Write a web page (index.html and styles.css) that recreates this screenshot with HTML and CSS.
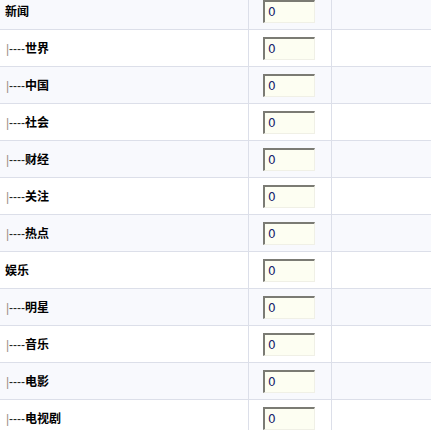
FILE: index.html
```html
<!DOCTYPE html>
<html>
<head>
<meta charset="utf-8">
<link rel="stylesheet" href="styles.css">
</head>
<body>
<table class="grid">
<tr class="alt"><td class="name"><b>新闻</b></td><td class="val"><input class="num" type="text" value="0"></td><td class="rest"></td></tr>
<tr><td class="name"><span class="bar">|</span><span class="dash">----</span><b>世界</b></td><td class="val"><input class="num" type="text" value="0"></td><td class="rest"></td></tr>
<tr class="alt"><td class="name"><span class="bar">|</span><span class="dash">----</span><b>中国</b></td><td class="val"><input class="num" type="text" value="0"></td><td class="rest"></td></tr>
<tr><td class="name"><span class="bar">|</span><span class="dash">----</span><b>社会</b></td><td class="val"><input class="num" type="text" value="0"></td><td class="rest"></td></tr>
<tr class="alt"><td class="name"><span class="bar">|</span><span class="dash">----</span><b>财经</b></td><td class="val"><input class="num" type="text" value="0"></td><td class="rest"></td></tr>
<tr><td class="name"><span class="bar">|</span><span class="dash">----</span><b>关注</b></td><td class="val"><input class="num" type="text" value="0"></td><td class="rest"></td></tr>
<tr class="alt"><td class="name"><span class="bar">|</span><span class="dash">----</span><b>热点</b></td><td class="val"><input class="num" type="text" value="0"></td><td class="rest"></td></tr>
<tr><td class="name"><b>娱乐</b></td><td class="val"><input class="num" type="text" value="0"></td><td class="rest"></td></tr>
<tr class="alt"><td class="name"><span class="bar">|</span><span class="dash">----</span><b>明星</b></td><td class="val"><input class="num" type="text" value="0"></td><td class="rest"></td></tr>
<tr><td class="name"><span class="bar">|</span><span class="dash">----</span><b>音乐</b></td><td class="val"><input class="num" type="text" value="0"></td><td class="rest"></td></tr>
<tr class="alt"><td class="name"><span class="bar">|</span><span class="dash">----</span><b>电影</b></td><td class="val"><input class="num" type="text" value="0"></td><td class="rest"></td></tr>
<tr><td class="name"><span class="bar">|</span><span class="dash">----</span><b>电视剧</b></td><td class="val"><input class="num" type="text" value="0"></td><td class="rest"></td></tr>
</table>
</body>
</html>
```

FILE: styles.css
```css
html, body {
  margin: 0;
  padding: 0;
  background: #ffffff;
  overflow: hidden;
}
body {
  font-family: "Noto Sans CJK SC", "Liberation Sans", sans-serif;
  font-size: 12px;
  color: #000;
}
.grid {
  border-collapse: collapse;
  width: 440px;
  margin-top: -7px;
  table-layout: fixed;
}
.grid td {
  height: 36px;
  padding: 0;
  border-bottom: 1px solid #dcdfe9;
  vertical-align: middle;
}
.grid tr.alt td {
  background: #f8f9fd;
}
.name {
  width: 243px;
  padding-left: 5px !important;
  border-right: 1px solid #dcdfe9;
  line-height: 14px;
  white-space: nowrap;
}
.name b {
  font-weight: 700;
}
.bar {
  color: #9a8f86;
  display: inline-block;
  margin-left: 1px;
  width: 3px;
  font-family: "Liberation Sans", sans-serif;
}
.dash {
  font-family: "Liberation Sans", sans-serif;
  font-weight: 400;
  letter-spacing: 0;
  color: #222;
  margin-right: 0;
}
.val {
  width: 68px;
  padding-left: 14px !important;
  border-right: 1px solid #dcdfe9;
}
.rest {
  width: auto;
}
.num {
  display: block;
  box-sizing: border-box;
  width: 52px;
  height: 23px;
  margin: 0;
  padding: 1px 0 0 3px;
  background: #fdfef2;
  border-top: 2px solid #7b7b74;
  border-left: 2px solid #7b7b74;
  border-right: 1px solid #f0f0e6;
  border-bottom: 1px solid #f0f0e6;
  font-family: "DejaVu Sans", Verdana, sans-serif;
  font-size: 12px;
  color: #14206a;
  outline: none;
}
```
